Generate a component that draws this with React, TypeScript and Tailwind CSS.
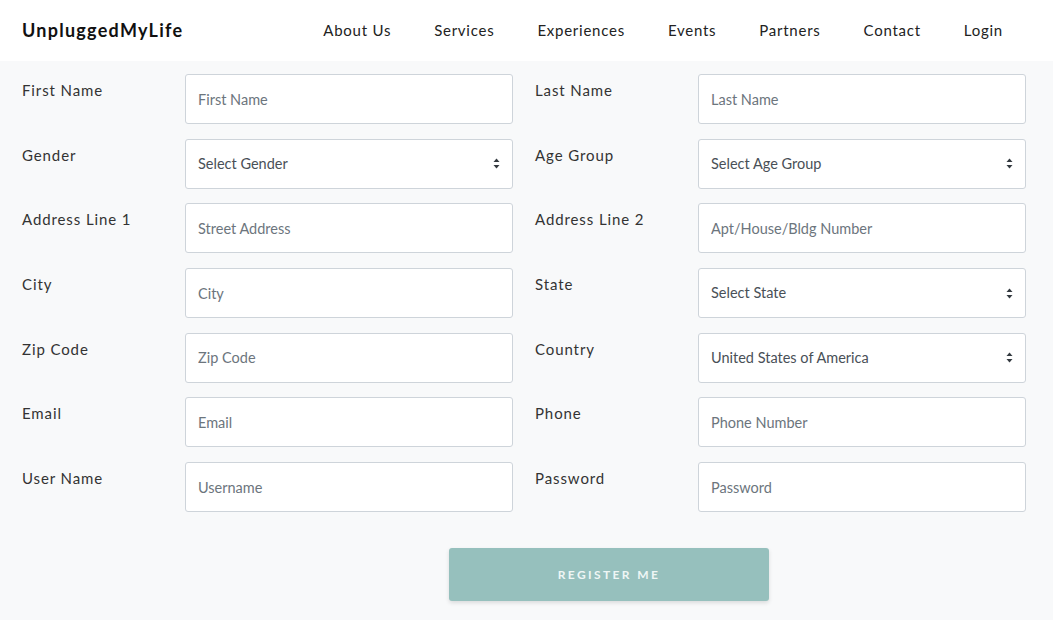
const navLinks = ['About Us', 'Services', 'Experiences', 'Events', 'Partners', 'Contact', 'Login'];

type Field = { label: string; placeholder: string; select?: boolean };

const rows: [Field, Field][] = [
  [
    { label: 'First Name', placeholder: 'First Name' },
    { label: 'Last Name', placeholder: 'Last Name' },
  ],
  [
    { label: 'Gender', placeholder: 'Select Gender', select: true },
    { label: 'Age Group', placeholder: 'Select Age Group', select: true },
  ],
  [
    { label: 'Address Line 1', placeholder: 'Street Address' },
    { label: 'Address Line 2', placeholder: 'Apt/House/Bldg Number' },
  ],
  [
    { label: 'City', placeholder: 'City' },
    { label: 'State', placeholder: 'Select State', select: true },
  ],
  [
    { label: 'Zip Code', placeholder: 'Zip Code' },
    { label: 'Country', placeholder: 'United States of America', select: true },
  ],
  [
    { label: 'Email', placeholder: 'Email' },
    { label: 'Phone', placeholder: 'Phone Number' },
  ],
  [
    { label: 'User Name', placeholder: 'Username' },
    { label: 'Password', placeholder: 'Password' },
  ],
];

/* ─── Select arrows ───────────────────────────────────────────── */

function SortArrows() {
  return (
    <svg width="7" height="11" viewBox="0 0 7 11" className="shrink-0">
      <path d="M3.5 0.5 L6.5 4 H0.5 Z" fill="#343a40" />
      <path d="M3.5 10.5 L6.5 7 H0.5 Z" fill="#343a40" />
    </svg>
  );
}

function FormField({ field }: { field: Field }) {
  return (
    <div className="flex">
      <label className="w-[163px] shrink-0 pt-[5px] text-[15px] tracking-[0.06em] text-[#333]">
        {field.label}
      </label>
      {field.select ? (
        <div className="flex h-[50px] w-[328px] items-center justify-between rounded-[3px] border border-[#ced4da] bg-white pl-[12px] pr-[12px] text-[14.5px] text-[#495057]">
          <span>{field.placeholder}</span>
          <SortArrows />
        </div>
      ) : (
        <input
          placeholder={field.placeholder}
          className="h-[50px] w-[328px] rounded-[3px] border border-[#ced4da] bg-white px-[12px] text-[14.5px] text-[#495057] outline-none placeholder:text-[#6c757d]"
        />
      )}
    </div>
  );
}

export default function App() {
  return (
    <div
      className="min-h-[620px] bg-[#f8f9fa]"
      style={{ fontFamily: 'Lato, "Noto Sans", sans-serif' }}
    >
      <header className="flex h-[61px] items-center justify-between bg-white pl-[22px] pr-[50px]">
        <div className="text-[18px] font-bold tracking-[0.07em] text-[#111]">UnpluggedMyLife</div>
        <nav className="flex gap-[43px]">
          {navLinks.map((l) => (
            <a key={l} className="text-[15px] tracking-[0.05em] text-[#222]">
              {l}
            </a>
          ))}
        </nav>
      </header>

      <form className="px-[22px] pt-[13px]">
        <div className="flex flex-col gap-[14.7px]">
          {rows.map(([a, b]) => (
            <div key={a.label} className="flex gap-[22px]">
              <FormField field={a} />
              <FormField field={b} />
            </div>
          ))}
        </div>
        <div className="pt-[36px] pl-[427px]">
          <button
            type="button"
            className="h-[53px] w-[320px] rounded-[3px] bg-[#96c0bd] text-[12px] font-bold tracking-[0.2em] text-[#eef6f5] shadow-[0_2px_4px_rgba(0,0,0,0.12)]"
          >
            REGISTER ME
          </button>
        </div>
      </form>
    </div>
  );
}
